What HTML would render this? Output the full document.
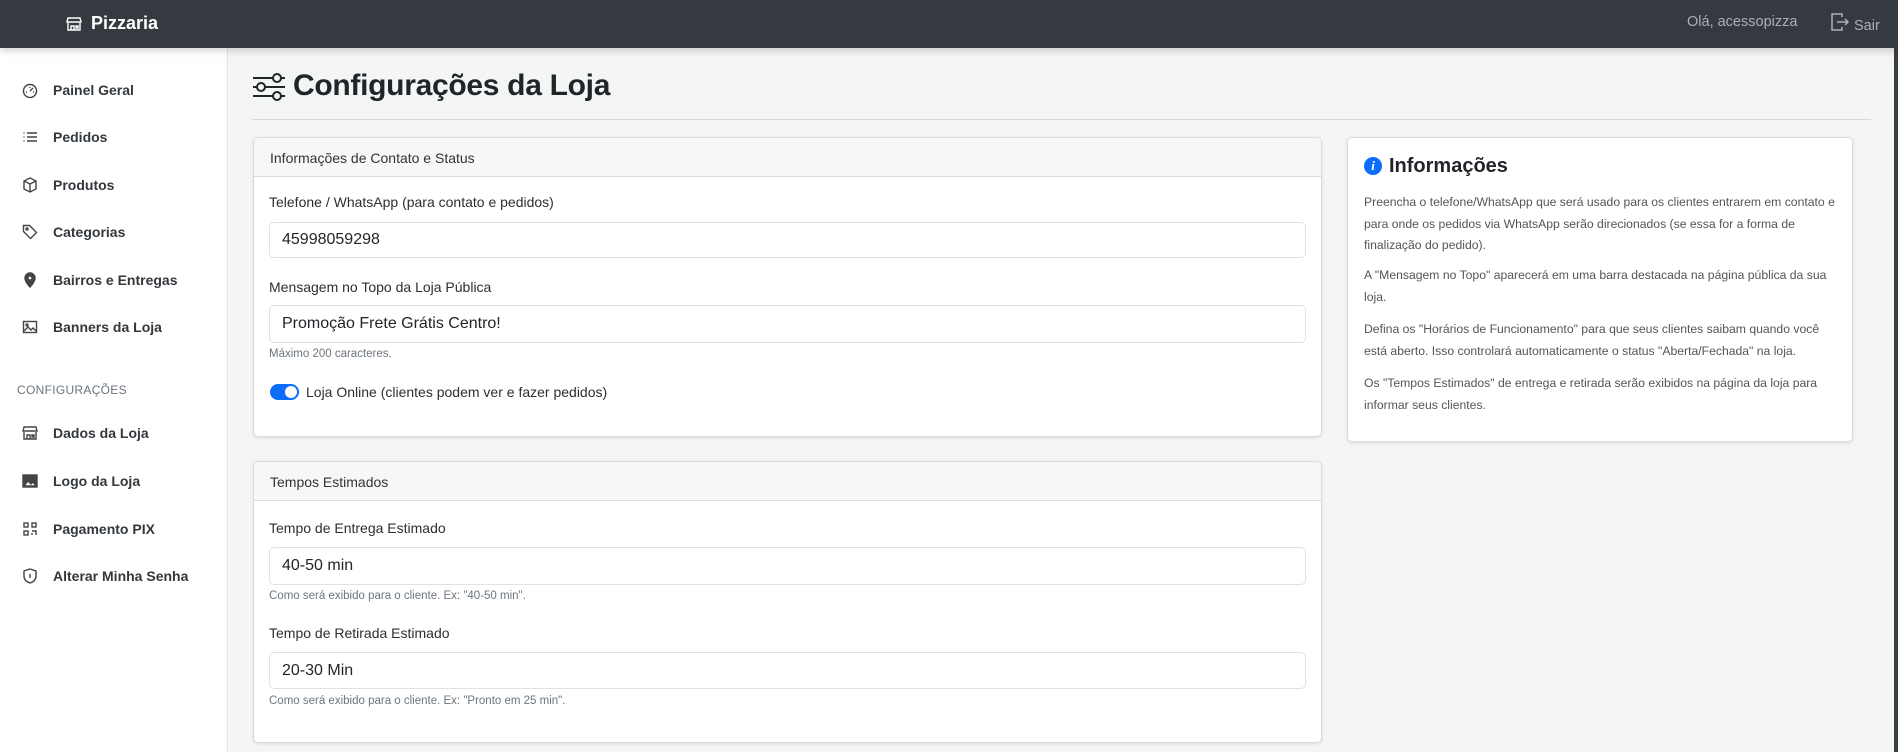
<!DOCTYPE html>
<html><head><meta charset="utf-8"><style>
*{box-sizing:border-box;margin:0;padding:0}
body{width:1898px;height:752px;overflow:hidden;background:#f4f5f5;font-family:"Liberation Sans",sans-serif;color:#212529;position:relative}
.a{position:absolute}
.nav{left:0;top:0;width:1898px;height:48px;background:#343a40;box-shadow:0 2px 8px rgba(0,0,0,.2);z-index:2}
.side{left:0;top:48px;width:228px;height:704px;background:#fff;border-right:1px solid #e3e3e3}
.it{left:22px;font-size:14px;font-weight:bold;color:#33383d;display:flex;align-items:center;height:20px}
.it svg{width:16px;height:16px;margin-right:15px;stroke:#444;fill:none;stroke-width:1.4}
.card{background:#fff;border:1px solid #d9dcdf;border-radius:5px;box-shadow:0 1px 3px rgba(0,0,0,.1);overflow:hidden}
.ch{height:39px;background:#f7f7f7;border-bottom:1px solid #d9dcdf;font-size:14px;padding:12px 16px;color:#333}
.lb{font-size:14px;color:#2b2f33}
.in{border:1px solid #dee2e6;border-radius:5px;background:#fff;font-size:16px;padding:0 12px;display:flex;align-items:center;color:#212529}
.sm{font-size:11.5px;color:#6c757d}
.p{font-size:12.2px;color:#555;line-height:21.5px;width:478px}
</style></head><body>
<div class="a nav">
 <svg class="a" style="left:66px;top:16px" width="16" height="16" viewBox="0 0 16 16" fill="none" stroke="#fff" stroke-width="1.4"><path d="M2 2h12l1 4H1z"/><path d="M2 7v7h12V7"/><path d="M5 14V10h3v4M10 10h2v2h-2z"/></svg>
 <div class="a" style="left:91px;top:13px;color:#fff;font-weight:bold;font-size:18px">Pizzaria</div>
 <div class="a" style="left:1687px;top:14px;color:#aab0b6;font-size:14.5px">Olá, acessopizza</div>
 <svg class="a" style="left:1830px;top:12px" width="20" height="20" viewBox="0 0 20 20" fill="none" stroke="#aab0b6" stroke-width="1.5"><path d="M12 5V2H2v16h10v-3"/><path d="M7 10h11M15 7l3 3-3 3"/></svg>
 <div class="a" style="left:1854px;top:18px;color:#aab0b6;font-size:14.5px">Sair</div>
</div>
<div class="a" style="right:0;top:48px;width:4px;height:704px;background:#3a3f44"></div>
<div class="a side">
 <div class="a it" style="top:32px"><svg viewBox="0 0 16 16"><circle cx="8" cy="9" r="6.5"/><path d="M8 9l3-3M4 10h1M11 10h1M8 5v1"/></svg>Painel Geral</div>
 <div class="a it" style="top:79px"><svg viewBox="0 0 16 16"><path d="M5 4h10M5 8h10M5 12h10M1.5 4h1M1.5 8h1M1.5 12h1"/></svg>Pedidos</div>
 <div class="a it" style="top:127px"><svg viewBox="0 0 16 16"><path d="M8 1l6 3v8l-6 3-6-3V4zM2 4l6 3 6-3M8 7v8"/></svg>Produtos</div>
 <div class="a it" style="top:174px"><svg viewBox="0 0 16 16"><path d="M1.5 1.5h6l7 7-6 6-7-7z"/><circle cx="5" cy="5" r="1"/></svg>Categorias</div>
 <div class="a it" style="top:222px"><svg viewBox="0 0 16 16" style="fill:#444"><path d="M8 15s5-5 5-9A5 5 0 003 6c0 4 5 9 5 9z"/><circle cx="8" cy="6" r="2" fill="#fff"/></svg>Bairros e Entregas</div>
 <div class="a it" style="top:269px"><svg viewBox="0 0 16 16"><rect x="1.5" y="2.5" width="13" height="11"/><path d="M2 12l4-4 3 3 2-2 3 3" /><circle cx="5" cy="6" r="1"/></svg>Banners da Loja</div>
 <div class="a" style="left:17px;top:335px;font-size:12px;color:#6c757d;letter-spacing:.3px">CONFIGURAÇÕES</div>
 <div class="a it" style="top:375px"><svg viewBox="0 0 16 16"><path d="M2 2h12l1 4H1z"/><path d="M2 7v7h12V7M5 14V10h3v4M10 10h2v2h-2z"/></svg>Dados da Loja</div>
 <div class="a it" style="top:423px"><svg viewBox="0 0 16 16" style="fill:#444"><rect x="1" y="2" width="14" height="12"/><path d="M2 13l4-5 3 3 2-2 3 4z" fill="#fff"/></svg>Logo da Loja</div>
 <div class="a it" style="top:471px"><svg viewBox="0 0 16 16"><rect x="2" y="2" width="4" height="4"/><rect x="10" y="2" width="4" height="4"/><rect x="2" y="10" width="4" height="4"/><path d="M10 10h4v4M10 12v2"/></svg>Pagamento PIX</div>
 <div class="a it" style="top:518px"><svg viewBox="0 0 16 16"><path d="M8 1l6 2v5c0 4-3 6-6 7-3-1-6-3-6-7V3z"/><path d="M8 6v4"/></svg>Alterar Minha Senha</div>
</div>
<svg class="a" style="left:252px;top:72px" width="34" height="30" viewBox="0 0 34 30" fill="none" stroke="#212529" stroke-width="2"><path d="M1 6h20M29 6h4M1 15h4M13 15h20M1 24h20M29 24h4"/><circle cx="25" cy="6" r="4"/><circle cx="9" cy="15" r="4"/><circle cx="25" cy="24" r="4"/></svg>
<div class="a" style="left:293px;top:69px;font-size:30px;font-weight:bold;color:#212529;letter-spacing:-0.3px">Configurações da Loja</div>
<div class="a" style="left:252px;top:119px;width:1619px;height:1px;background:#d6d8da"></div>

<div class="a card" style="left:253px;top:137px;width:1069px;height:300px">
 <div class="ch">Informações de Contato e Status</div>
</div>
<div class="a lb" style="left:269px;top:194px">Telefone / WhatsApp (para contato e pedidos)</div>
<div class="a in" style="left:269px;top:222px;width:1037px;height:36px">45998059298</div>
<div class="a lb" style="left:269px;top:279px">Mensagem no Topo da Loja Pública</div>
<div class="a in" style="left:269px;top:305px;width:1037px;height:38px">Promoção Frete Grátis Centro!</div>
<div class="a sm" style="left:269px;top:348px">Máximo 200 caracteres.</div>
<div class="a" style="left:270px;top:384px;width:29px;height:16px;border-radius:8px;background:#0d6efd"></div>
<div class="a" style="left:285px;top:386px;width:12px;height:12px;border-radius:6px;background:#fff"></div>
<div class="a lb" style="left:306px;top:384px">Loja Online (clientes podem ver e fazer pedidos)</div>

<div class="a card" style="left:253px;top:461px;width:1069px;height:282px">
 <div class="ch">Tempos Estimados</div>
</div>
<div class="a lb" style="left:269px;top:520px">Tempo de Entrega Estimado</div>
<div class="a in" style="left:269px;top:547px;width:1037px;height:38px">40-50 min</div>
<div class="a sm" style="left:269px;top:590px">Como será exibido para o cliente. Ex: "40-50 min".</div>
<div class="a lb" style="left:269px;top:625px">Tempo de Retirada Estimado</div>
<div class="a in" style="left:269px;top:652px;width:1037px;height:37px">20-30 Min</div>
<div class="a sm" style="left:269px;top:695px">Como será exibido para o cliente. Ex: "Pronto em 25 min".</div>

<div class="a card" style="left:1347px;top:137px;width:506px;height:305px"></div>
<div class="a" style="left:1364px;top:157px;width:18px;height:18px;border-radius:9px;background:#0d6efd;color:#fff;font:italic bold 13px 'Liberation Serif',serif;text-align:center;line-height:18px">i</div>
<div class="a" style="left:1389px;top:155px;font-size:20px;font-weight:bold;color:#212529">Informações</div>
<div class="a p" style="left:1364px;top:192px">Preencha o telefone/WhatsApp que será usado para os clientes entrarem em contato e para onde os pedidos via WhatsApp serão direcionados (se essa for a forma de finalização do pedido).</div>
<div class="a p" style="left:1364px;top:265px">A "Mensagem no Topo" aparecerá em uma barra destacada na página pública da sua loja.</div>
<div class="a p" style="left:1364px;top:319px">Defina os "Horários de Funcionamento" para que seus clientes saibam quando você está aberto. Isso controlará automaticamente o status "Aberta/Fechada" na loja.</div>
<div class="a p" style="left:1364px;top:373px">Os "Tempos Estimados" de entrega e retirada serão exibidos na página da loja para informar seus clientes.</div>
</body></html>
